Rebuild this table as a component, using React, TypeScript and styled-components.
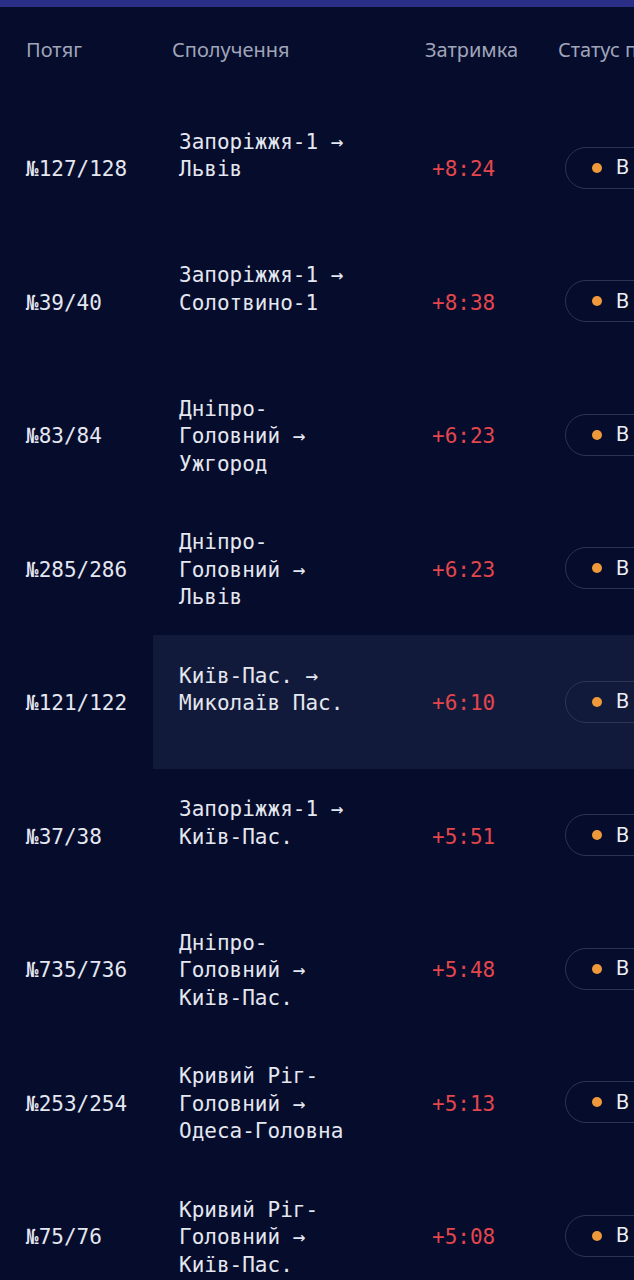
import React from "react";
import styled, { createGlobalStyle } from "styled-components";

const GlobalStyle = createGlobalStyle`
  html, body { margin: 0; padding: 0; background: #050c2c; }
  body { overflow-x: hidden; }
`;

const Page = styled.div`
  width: 634px;
  min-height: 1280px;
  overflow: hidden;
  background: #050c2c;
`;

const TopBar = styled.div`
  height: 7px;
  background: #2b2e86;
`;

const Table = styled.div`
  width: 820px;
  display: flex;
  flex-direction: column;
`;

const cols = "153px 253px 133px 281px";

const HeaderRow = styled.div`
  display: grid;
  grid-template-columns: ${cols};
  height: 94px;
  align-items: start;
`;

const HeadCell = styled.div<{ $pad: number }>`
  padding: 29px 0 0 ${(p) => p.$pad}px;
  font-family: "Noto Sans", "Open Sans", sans-serif;
  font-size: 20px;
  line-height: 28px;
  color: #a0a5b9;
  white-space: nowrap;
`;

const Row = styled.div<{ $active?: boolean }>`
  display: grid;
  grid-template-columns: ${cols};
  height: 133.5px;
  background: ${(p) => (p.$active ? "#121a3b" : "transparent")};
`;

const Cell = styled.div`
  display: flex;
  align-items: center;
  padding: 4px 0 0 26px;
  box-sizing: border-box;
  font-family: "DejaVu Sans Mono", "Liberation Mono", monospace;
  font-size: 21px;
  line-height: 27.5px;
  color: #e4e7f0;
`;

const TrainCell = styled(Cell)`
  background: #050c2c;
`;

const RouteText = styled.div`
  width: 13.5ch;
  min-height: 82.5px;
`;

const DelayCell = styled(Cell)`
  color: #e3464c;
`;

const Pill = styled.div`
  display: flex;
  align-items: center;
  gap: 14px;
  height: 42px;
  box-sizing: border-box;
  padding: 0 26px;
  margin-top: -4px;
  border: 1px solid #2c3453;
  border-radius: 21px;
  font-family: Roboto, "Noto Sans", sans-serif;
  font-size: 21px;
  word-spacing: 4px;
  color: #eceef5;
  white-space: nowrap;
`;

const Dot = styled.span`
  width: 10px;
  height: 10px;
  border-radius: 50%;
  background: #f0993a;
  flex: none;
`;

const rows = [
  { n: "№127/128", r: "Запоріжжя-1 → Львів", d: "+8:24" },
  { n: "№39/40", r: "Запоріжжя-1 → Солотвино-1", d: "+8:38" },
  { n: "№83/84", r: "Дніпро-Головний → Ужгород", d: "+6:23" },
  { n: "№285/286", r: "Дніпро-Головний → Львів", d: "+6:23" },
  { n: "№121/122", r: "Київ-Пас. → Миколаїв Пас.", d: "+6:10", active: true },
  { n: "№37/38", r: "Запоріжжя-1 → Київ-Пас.", d: "+5:51" },
  { n: "№735/736", r: "Дніпро-Головний → Київ-Пас.", d: "+5:48" },
  { n: "№253/254", r: "Кривий Ріг-Головний → Одеса-Головна", d: "+5:13" },
  { n: "№75/76", r: "Кривий Ріг-Головний → Київ-Пас.", d: "+5:08" },
];

export default function App() {
  return (
    <Page>
      <GlobalStyle />
      <TopBar />
      <Table>
        <HeaderRow>
          <HeadCell $pad={26}>Потяг</HeadCell>
          <HeadCell $pad={19}>Сполучення</HeadCell>
          <HeadCell $pad={19}>Затримка</HeadCell>
          <HeadCell $pad={19}>Статус поїзда</HeadCell>
        </HeaderRow>
        {rows.map((row) => (
          <Row key={row.n} $active={row.active}>
            <TrainCell>{row.n}</TrainCell>
            <Cell>
              <RouteText>{row.r}</RouteText>
            </Cell>
            <DelayCell>{row.d}</DelayCell>
            <Cell>
              <Pill>
                <Dot />В дорозі
              </Pill>
            </Cell>
          </Row>
        ))}
      </Table>
    </Page>
  );
}
